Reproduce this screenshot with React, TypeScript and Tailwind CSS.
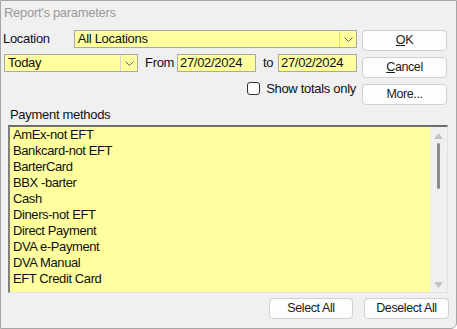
import React, { useState } from 'react';

const methods = [
    'AmEx-not EFT',
    'Bankcard-not EFT',
    'BarterCard',
    'BBX -barter',
    'Cash',
    'Diners-not EFT',
    'Direct Payment',
    'DVA e-Payment',
    'DVA Manual',
    'EFT Credit Card',
];

const Chevron: React.FC = () => (
    <svg width="9" height="5" viewBox="0 0 9 5" fill="none" stroke="#606060" strokeWidth={1}>
        <path d="M0.5 0.5L4.5 4.5L8.5 0.5" />
    </svg>
);

const Combo: React.FC<{ value: string; className: string }> = ({ value, className }) => (
    <div className={`flex h-[18px] border border-[#a8a8a8] bg-[#ffffa0] ${className}`}>
        <span className="flex-1 pl-[3px] leading-[16px]">{value}</span>
        <span className="flex w-[17px] items-center justify-center border-l border-[#d4d4d4] bg-[#ffffa0]">
            <Chevron />
        </span>
    </div>
);

const Btn: React.FC<{ children: React.ReactNode; className?: string }> = ({ children, className = '' }) => (
    <button className={`h-[21px] rounded-[4px] border border-[#d0d0d0] bg-[#fdfdfd] text-[12.5px] leading-[19px] tracking-[-0.4px] text-[#1a1a1a] ${className}`}>
        {children}
    </button>
);

export default function App() {
    const [totalsOnly, setTotalsOnly] = useState(false);

    return (
        <div
            className="h-[329px] w-[457px] overflow-hidden rounded-br-[6px] border border-[#a6a6a6] bg-[#f0f0f0] text-[13px] text-[#101010] tracking-[-0.3px]"
            style={{ fontFamily: '"Liberation Sans", Arial, sans-serif' }}
        >
            {/* Title */}
            <div className="h-[29px] pl-[3px] pt-[4px] text-[13px] leading-[16px] text-[#9a9a9a]">
                Report's parameters
            </div>

            {/* Top area */}
            <div className="flex">
                <div className="w-[356px] pl-[2px]">
                    <div className="flex h-[18px] items-center">
                        <span className="w-[71px] leading-[16px]">Location</span>
                        <Combo value="All Locations" className="w-[284px]" />
                    </div>
                    <div className="mt-[6px] flex h-[18px] items-center pl-[1px]">
                        <Combo value="Today" className="w-[134px]" />
                        <span className="ml-[7px] w-[32px]">From</span>
                        <div className="h-[18px] w-[79px] border border-[#a8a8a8] bg-[#ffffa0] pl-[2px] leading-[16px]">27/02/2024</div>
                        <span className="ml-[7px] w-[15px]">to</span>
                        <div className="h-[18px] w-[79px] border border-[#a8a8a8] bg-[#ffffa0] pl-[2px] leading-[16px]">27/02/2024</div>
                    </div>
                    <label className="mt-[10px] flex h-[13px] items-center justify-end pr-[1px]">
                        <input
                            type="checkbox"
                            checked={totalsOnly}
                            onChange={() => setTotalsOnly(!totalsOnly)}
                            className="h-[13px] w-[13px] appearance-none rounded-[3px] border border-[#333] bg-white"
                        />
                        <span className="ml-[6px] leading-[13px]">Show totals only</span>
                    </label>
                </div>
                <div className="ml-[5px] flex w-[85px] flex-col gap-[6px]">
                    <Btn><span className="underline">O</span>K</Btn>
                    <Btn><span className="underline">C</span>ancel</Btn>
                    <Btn>More...</Btn>
                </div>
            </div>

            {/* Payment methods */}
            <div className="ml-[9px] mt-[2px] h-[18px] leading-[16px]">Payment methods</div>
            <div className="ml-[7px] flex h-[168px] w-[440px] border-l-2 border-t-2 border-b border-r border-l-[#808080] border-t-[#6e6e6e] border-b-[#e3e3e3] border-r-[#e3e3e3] bg-[#ffffa0]">
                <ul className="flex-1 pl-[3px] tracking-[-0.4px]">
                    {methods.map((m) => (
                        <li key={m} className="h-[16px] leading-[16px]">{m}</li>
                    ))}
                </ul>
                <div className="flex w-[17px] flex-col items-center bg-[#f0f0f0]">
                    <svg width="9" height="6" viewBox="0 0 9 6" className="mt-[6px]">
                        <path d="M0 6L4.5 0L9 6Z" fill="#c4c4c4" />
                    </svg>
                    <div className="mt-[4px] h-[46px] w-[3px] rounded-full bg-[#8a8a8a]" />
                    <div className="flex-1" />
                    <svg width="9" height="6" viewBox="0 0 9 6" className="mb-[4px]">
                        <path d="M0 0L4.5 6L9 0Z" fill="#c4c4c4" />
                    </svg>
                </div>
            </div>

            {/* Bottom buttons */}
            <div className="mt-[5px] flex justify-end gap-[11px] pr-[7px]">
                <Btn className="w-[84px]">Select All</Btn>
                <Btn className="w-[85px]">Deselect All</Btn>
            </div>
        </div>
    );
}
